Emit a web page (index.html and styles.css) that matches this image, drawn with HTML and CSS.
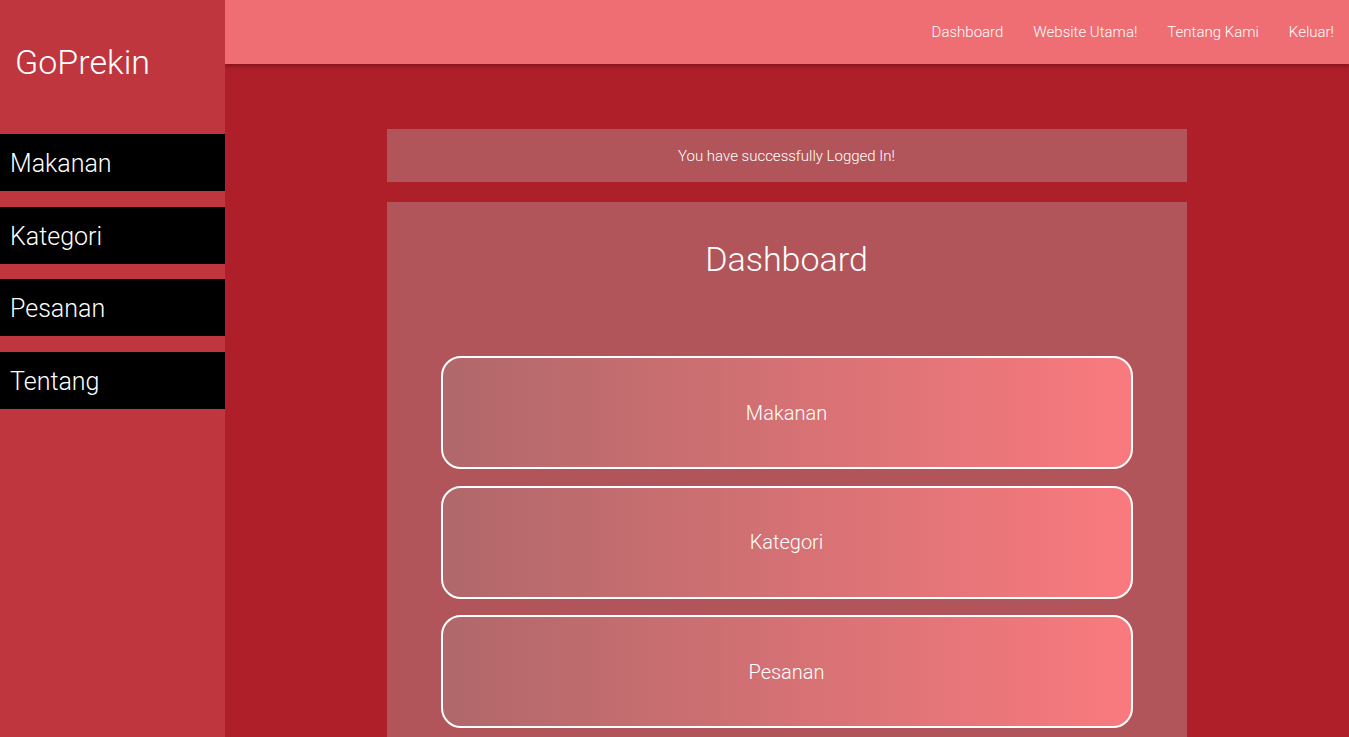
FILE: index.html
```html
<!DOCTYPE html>
<html>
<head>
<meta charset="utf-8">
<link rel="stylesheet" href="styles.css">
</head>
<body>
<div class="layout">
  <aside class="sidebar">
    <div class="brand">GoPrekin</div>
    <nav class="side-nav">
      <a class="side-item">Makanan</a>
      <a class="side-item">Kategori</a>
      <a class="side-item">Pesanan</a>
      <a class="side-item">Tentang</a>
    </nav>
  </aside>
  <div class="main">
    <header class="topbar">
      <a class="top-link">Dashboard</a>
      <a class="top-link">Website Utama!</a>
      <a class="top-link">Tentang Kami</a>
      <a class="top-link">Keluar!</a>
    </header>
    <div class="content">
      <div class="container">
        <div class="alert">You have successfully Logged In!</div>
        <div class="card">
          <h1 class="card-title">Dashboard</h1>
          <div class="tiles">
            <a class="tile">Makanan</a>
            <a class="tile">Kategori</a>
            <a class="tile">Pesanan</a>
          </div>
        </div>
      </div>
    </div>
  </div>
</div>
</body>
</html>
```

FILE: styles.css
```css
* { box-sizing: border-box; }
html, body { margin: 0; padding: 0; height: 100%; overflow: hidden; }
body {
  font-family: Roboto, "Liberation Sans", sans-serif;
  font-weight: 300;
  color: #fff;
  background: #ae1f29;
}
.layout { display: flex; height: 737px; }
.sidebar {
  width: 225px;
  flex: none;
  background: #bf363f;
  position: relative;
  z-index: 2;
}
.brand {
  font-size: 34px;
  padding: 45px 0 0 15px;
  height: 134px;
  line-height: 1;
}
.side-nav { display: flex; flex-direction: column; gap: 15.67px; }
.side-item {
  display: flex;
  align-items: center;
  height: 57px;
  background: #000;
  font-size: 25px;
  padding-left: 10px;
  padding-top: 2px;
  color: #fff;
}
.main { flex: 1; display: flex; flex-direction: column; min-width: 0; }
.topbar {
  height: 64px;
  flex: none;
  background: #ef6e73;
  display: flex;
  align-items: center;
  justify-content: flex-end;
  gap: 30px;
  padding-right: 15px;
  box-shadow: 0 2px 4px rgba(80, 0, 0, 0.45);
  position: relative;
  z-index: 1;
}
.top-link { font-size: 15px; color: #fff; font-weight: 300; }
.content { flex: 1; display: flex; justify-content: center; padding-top: 65px; padding-right: 1px; }
.container { width: 800px; display: flex; flex-direction: column; gap: 20px; }
.alert {
  height: 53px;
  background: #b1555a;
  display: flex;
  align-items: center;
  justify-content: center;
  font-size: 15px;
  font-weight: 300;
}
.card {
  background: #b1555a;
  padding: 36px 54px 40px;
  flex: 1;
}
.card-title {
  margin: 0;
  text-align: center;
  font-size: 34px;
  font-weight: 300;
  line-height: 42px;
}
.tiles { display: flex; flex-direction: column; gap: 16.5px; margin-top: 76px; }
.tile {
  height: 113px;
  border: 2px solid #fff;
  border-radius: 20px;
  background: linear-gradient(to right, #b0686a, #f97a7e);
  display: flex;
  align-items: center;
  justify-content: center;
  font-size: 20px;
  color: #fff;
}
```
